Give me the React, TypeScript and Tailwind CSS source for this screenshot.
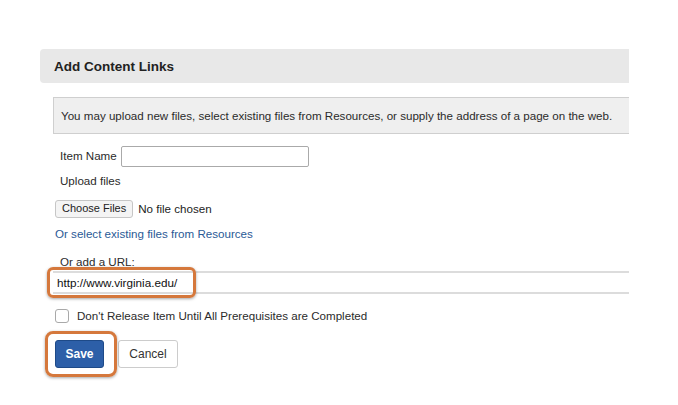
const App = () => {
    return (
        <div className="w-[678px] h-[405px] bg-white font-['Liberation_Sans',Arial,sans-serif] text-[#333]">
            <div className="pt-[49px] pl-[40px] w-[629px]">
                <div className="h-[34px] bg-[#e8e8e8] rounded-l-[4px] flex items-center pl-[14px] pt-[2px]">
                    <span className="text-[13.5px] font-bold text-[#222]">Add Content Links</span>
                </div>

                <div className="pl-[13px] pt-[14px]">
                    <div className="h-[37px] bg-[#efefef] border-t border-l border-b border-[#cfcfcf] flex items-center pl-[7px]">
                        <span className="text-[11.6px] text-[#2b2b2b] whitespace-nowrap">
                            You may upload new files, select existing files from Resources, or supply the address of a page on the web.
                        </span>
                    </div>

                    <div className="flex items-center mt-[11px] pl-[7px] h-[22px]">
                        <span className="text-[11.6px] text-[#2b2b2b] mr-[4px]">Item Name</span>
                        <input
                            type="text"
                            className="w-[188px] h-[21px] border border-[#aaa] rounded-[2px] bg-white outline-none"
                        />
                    </div>

                    <div className="pl-[7px] mt-[5px] text-[11.6px] text-[#2b2b2b] h-[18px] leading-[18px]">Upload files</div>

                    <div className="flex items-center mt-[9px] pl-[2px] h-[19px]">
                        <button
                            type="button"
                            className="h-[18px] px-[6px] border border-[#c6c6c6] rounded-[3px] bg-[#f4f4f4] text-[11px] text-[#222] leading-none"
                        >
                            Choose Files
                        </button>
                        <span className="ml-[5px] text-[11.6px] text-[#222]">No file chosen</span>
                    </div>

                    <div className="pl-[2px] mt-[7px] text-[11.6px] text-[#2a5a96] h-[18px] leading-[18px]">
                        Or select existing files from Resources
                    </div>

                    <div className="pl-[7px] mt-[11px] text-[11.6px] text-[#2b2b2b] h-[16px] leading-[16px]">Or add a URL:</div>

                    <div className="relative mt-[1px]">
                        <div className="h-[23px] border-t-2 border-b-2 border-[#dcdcdc] flex items-center pl-[4px]">
                            <span className="text-[11.7px] text-[#111]">http://www.virginia.edu/</span>
                        </div>
                        <div className="absolute left-[-6px] top-[-4px] w-[149px] h-[31px] border-[3px] border-[#d5783c] rounded-[6px] shadow-[0_1px_3px_rgba(0,0,0,0.35)]" />
                    </div>

                    <div className="flex items-center mt-[13px] pl-[2px]">
                        <span className="w-[14px] h-[14px] border border-[#a9a9a9] rounded-[3px] bg-white" />
                        <span className="ml-[8px] text-[11.6px] text-[#2b2b2b]">
                            Don't Release Item Until All Prerequisites are Completed
                        </span>
                    </div>

                    <div className="flex items-center mt-[16px] pl-[2px]">
                        <div className="relative">
                            <button
                                type="button"
                                className="w-[49px] h-[28px] bg-[#2d5fa8] border border-[#1e4a88] rounded-[3px] text-white text-[12px] font-bold"
                            >
                                Save
                            </button>
                            <div className="absolute left-[-10px] top-[-9px] w-[72px] h-[46px] border-[3px] border-[#d5783c] rounded-[8px] shadow-[0_1px_3px_rgba(0,0,0,0.35)]" />
                        </div>
                        <button
                            type="button"
                            className="ml-[14px] w-[60px] h-[28px] bg-white border border-[#cccccc] rounded-[3px] text-[#333] text-[12px]"
                        >
                            Cancel
                        </button>
                    </div>
                </div>
            </div>
        </div>
    )
}

export default App
